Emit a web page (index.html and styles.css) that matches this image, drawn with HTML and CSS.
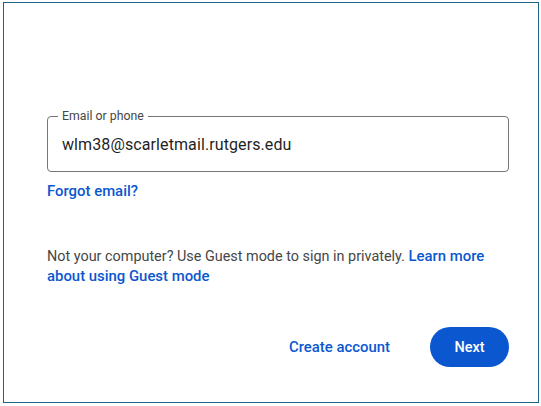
FILE: index.html
```html
<!DOCTYPE html>
<html>
<head>
<meta charset="utf-8">
<link rel="stylesheet" href="styles.css">
</head>
<body>
<div class="frame">
  <div class="field">
    <span class="label">Email or phone</span>
    <div class="value">wlm38@scarletmail.rutgers.edu</div>
  </div>
  <a class="link forgot">Forgot email?</a>
  <p class="guest">Not your computer? Use Guest mode to sign in privately. <a class="link">Learn more about using Guest mode</a></p>
  <div class="actions">
    <a class="link create">Create account</a>
    <button class="next">Next</button>
  </div>
</div>
</body>
</html>
```
FILE: styles.css
```css
html, body {
  margin: 0;
  padding: 0;
  background: #ffffff;
}
body {
  font-family: Roboto, "Liberation Sans", Arial, sans-serif;
  color: #1f1f1f;
}
.frame {
  box-sizing: border-box;
  margin: 2px 0 0 3px;
  width: 536px;
  height: 401px;
  border: 1px solid #1d6185;
  padding: 113px 29px 0 43px;
  display: flex;
  flex-direction: column;
}
.field {
  position: relative;
  box-sizing: border-box;
  height: 56px;
  border: 1px solid #747775;
  border-radius: 4px;
  padding: 0 14px;
  display: flex;
  align-items: center;
}
.label {
  position: absolute;
  top: -9px;
  left: 10px;
  padding: 0 4px;
  background: #fff;
  font-size: 12.3px;
  line-height: 16px;
  color: #444746;
}
.value {
  font-size: 16px;
  color: #1f1f1f;
  letter-spacing: 0.1px;
}
.link {
  color: #0b57d0;
  font-weight: 500;
  text-decoration: none;
  font-size: 14.9px;
}
.forgot {
  line-height: 20px;
  margin-top: 9px;
  align-self: flex-start;
}
.guest {
  margin: 46px 0 0 0;
  font-size: 14.4px;
  line-height: 20px;
  color: #444746;
  padding-right: 10px;
}
.guest .link {
  line-height: 1;
}
.actions {
  margin-top: 40px;
  display: flex;
  justify-content: flex-end;
  align-items: center;
  gap: 40px;
}
.next {
  width: 79px;
  height: 40px;
  border: none;
  border-radius: 20px;
  background: #0b57d0;
  color: #fff;
  font-family: Roboto, "Liberation Sans", Arial, sans-serif;
  font-size: 14.5px;
  font-weight: 500;
}
```
